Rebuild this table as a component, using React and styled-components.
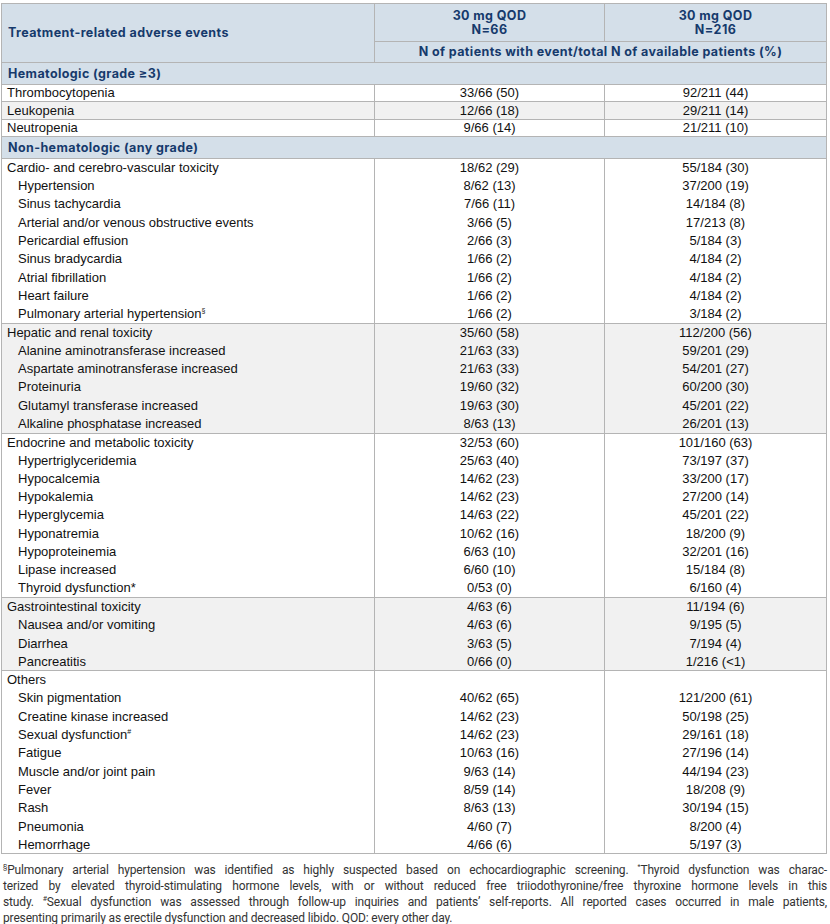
import React from 'react';
import styled, { createGlobalStyle } from 'styled-components';

const GlobalStyle = createGlobalStyle`
  html, body {
    margin: 0;
    padding: 0;
    background: #ffffff;
  }
  body {
    font-family: "Liberation Sans", Arial, sans-serif;
    color: #111;
  }
`;

const NAVY = '#163a6c';
const HEAD_BG = '#d4dfe9';
const LINE = '#b4b4b4';

const Page = styled.div`
  padding: 3px 4px 0 1px;
`;

const Table = styled.table`
  width: 825px;
  border-collapse: collapse;
  table-layout: fixed;
  border: 1px solid ${LINE};
  font-size: 13px;
`;

const HeadCell = styled.th`
  background: ${HEAD_BG};
  color: ${NAVY};
  font-family: "Inter", "Open Sans", sans-serif;
  font-weight: 700;
  font-size: 12.5px;
  letter-spacing: 0.4px;
  line-height: 13.5px;
  text-align: ${(p) => (p.$left ? 'left' : 'center')};
  padding: ${(p) => (p.$left ? '0 6px' : '0 4px')};
  border: 1px solid ${LINE};
  height: ${(p) => p.$h || 'auto'};
  vertical-align: middle;
`;

const SectionCell = styled.td`
  background: ${HEAD_BG};
  color: ${NAVY};
  font-family: "Inter", "Open Sans", sans-serif;
  font-weight: 700;
  font-size: 12.5px;
  letter-spacing: 0.4px;
  height: 21px;
  padding: 0 6px;
  border-top: 1px solid ${LINE};
  border-bottom: 1px solid ${LINE};
`;

const Group = styled.tbody`
  background: ${(p) => (p.$striped ? '#f1f1f1' : '#ffffff')};
  border-top: 1px solid ${LINE};
  border-bottom: 1px solid ${LINE};
`;

const Row = styled.tr`
  height: ${(p) => (p.$ruled ? '17.4px' : '18.3px')};
  background: ${(p) => (p.$striped ? '#f1f1f1' : 'transparent')};
  border-bottom: ${(p) => (p.$ruled ? `1px solid ${LINE}` : 'none')};
`;

const NameCell = styled.td`
  padding: 0 0 0 ${(p) => (p.$indent ? '16px' : '5px')};
  line-height: 16px;
  white-space: nowrap;
  border-right: 1px solid ${LINE};
  vertical-align: middle;
`;

const ValueCell = styled.td`
  text-align: center;
  line-height: 16px;
  padding: 0;
  border-right: 1px solid ${LINE};
  vertical-align: middle;
`;

const Mark = styled.sup`
  font-size: 7px;
  line-height: 0;
  vertical-align: 5px;
`;

const Notes = styled.div`
  margin-top: 8px;
  padding-left: 2px;
  width: 824px;
  font-family: "Roboto", "Liberation Sans", sans-serif;
  font-size: 12px;
  letter-spacing: -0.15px;
  line-height: 16px;
  color: #333;
`;

const NoteLine = styled.span`
  display: block;
  text-align: justify;
  text-align-last: ${(p) => (p.$last ? 'left' : 'justify')};
  white-space: nowrap;
`;

const hematologic = [
  ['Thrombocytopenia', '33/66 (50)', '92/211 (44)'],
  ['Leukopenia', '12/66 (18)', '29/211 (14)'],
  ['Neutropenia', '9/66 (14)', '21/211 (10)'],
];

const groups = [
  {
    head: ['Cardio- and cerebro-vascular toxicity', '18/62 (29)', '55/184 (30)'],
    items: [
      ['Hypertension', '8/62 (13)', '37/200 (19)'],
      ['Sinus tachycardia', '7/66 (11)', '14/184 (8)'],
      ['Arterial and/or venous obstructive events', '3/66 (5)', '17/213 (8)'],
      ['Pericardial effusion', '2/66 (3)', '5/184 (3)'],
      ['Sinus bradycardia', '1/66 (2)', '4/184 (2)'],
      ['Atrial fibrillation', '1/66 (2)', '4/184 (2)'],
      ['Heart failure', '1/66 (2)', '4/184 (2)'],
      ['Pulmonary arterial hypertension', '1/66 (2)', '3/184 (2)', '§'],
    ],
  },
  {
    head: ['Hepatic and renal toxicity', '35/60 (58)', '112/200 (56)'],
    items: [
      ['Alanine aminotransferase increased', '21/63 (33)', '59/201 (29)'],
      ['Aspartate aminotransferase increased', '21/63 (33)', '54/201 (27)'],
      ['Proteinuria', '19/60 (32)', '60/200 (30)'],
      ['Glutamyl transferase increased', '19/63 (30)', '45/201 (22)'],
      ['Alkaline phosphatase increased', '8/63 (13)', '26/201 (13)'],
    ],
  },
  {
    head: ['Endocrine and metabolic toxicity', '32/53 (60)', '101/160 (63)'],
    items: [
      ['Hypertriglyceridemia', '25/63 (40)', '73/197 (37)'],
      ['Hypocalcemia', '14/62 (23)', '33/200 (17)'],
      ['Hypokalemia', '14/62 (23)', '27/200 (14)'],
      ['Hyperglycemia', '14/63 (22)', '45/201 (22)'],
      ['Hyponatremia', '10/62 (16)', '18/200 (9)'],
      ['Hypoproteinemia', '6/63 (10)', '32/201 (16)'],
      ['Lipase increased', '6/60 (10)', '15/184 (8)'],
      ['Thyroid dysfunction*', '0/53 (0)', '6/160 (4)'],
    ],
  },
  {
    head: ['Gastrointestinal toxicity', '4/63 (6)', '11/194 (6)'],
    items: [
      ['Nausea and/or vomiting', '4/63 (6)', '9/195 (5)'],
      ['Diarrhea', '3/63 (5)', '7/194 (4)'],
      ['Pancreatitis', '0/66 (0)', '1/216 (<1)'],
    ],
  },
  {
    head: ['Others', '', ''],
    items: [
      ['Skin pigmentation', '40/62 (65)', '121/200 (61)'],
      ['Creatine kinase increased', '14/62 (23)', '50/198 (25)'],
      ['Sexual dysfunction', '14/62 (23)', '29/161 (18)', '#'],
      ['Fatigue', '10/63 (16)', '27/196 (14)'],
      ['Muscle and/or joint pain', '9/63 (14)', '44/194 (23)'],
      ['Fever', '8/59 (14)', '18/208 (9)'],
      ['Rash', '8/63 (13)', '30/194 (15)'],
      ['Pneumonia', '4/60 (7)', '8/200 (4)'],
      ['Hemorrhage', '4/66 (6)', '5/197 (3)'],
    ],
  },
];

const DataRow = ({ row, indent, striped, ruled }) => {
  const [name, a, b, mark] = row;
  return (
    <Row $striped={striped} $ruled={ruled}>
      <NameCell $indent={indent}>
        {name}
        {mark && <Mark>{mark}</Mark>}
      </NameCell>
      <ValueCell>{a}</ValueCell>
      <ValueCell>{b}</ValueCell>
    </Row>
  );
};

const App = () => (
  <Page>
    <GlobalStyle />
    <Table>
      <colgroup>
        <col style={{ width: '373px' }} />
        <col style={{ width: '230px' }} />
        <col style={{ width: '222px' }} />
      </colgroup>
      <thead>
        <tr>
          <HeadCell $left rowSpan={2}>Treatment-related adverse events</HeadCell>
          <HeadCell $h="37px">30 mg QOD<br />N=66</HeadCell>
          <HeadCell $h="37px">30 mg QOD<br />N=216</HeadCell>
        </tr>
        <tr>
          <HeadCell colSpan={2} $h="20px">
            N of patients with event/total N of available patients (%)
          </HeadCell>
        </tr>
      </thead>
      <tbody>
        <tr>
          <SectionCell colSpan={3}>Hematologic (grade ≥3)</SectionCell>
        </tr>
        {hematologic.map((row, i) => (
          <DataRow key={row[0]} row={row} striped={i === 1} ruled />
        ))}
        <tr>
          <SectionCell colSpan={3}>Non-hematologic (any grade)</SectionCell>
        </tr>
      </tbody>
      {groups.map((g, gi) => (
        <Group key={g.head[0]} $striped={gi % 2 === 1}>
          <DataRow row={g.head} />
          {g.items.map((row) => (
            <DataRow key={row[0]} row={row} indent />
          ))}
        </Group>
      ))}
    </Table>
    <Notes>
      <NoteLine>
        <Mark>§</Mark>Pulmonary arterial hypertension was identified as highly suspected based on echocardiographic screening. <Mark>*</Mark>Thyroid dysfunction was charac-
      </NoteLine>
      <NoteLine>
        terized by elevated thyroid-stimulating hormone levels, with or without reduced free triiodothyronine/free thyroxine hormone levels in this
      </NoteLine>
      <NoteLine>
        study. <Mark>#</Mark>Sexual dysfunction was assessed through follow-up inquiries and patients’ self-reports. All reported cases occurred in male patients,
      </NoteLine>
      <NoteLine $last>
        presenting primarily as erectile dysfunction and decreased libido. QOD: every other day.
      </NoteLine>
    </Notes>
  </Page>
);

export default App;
